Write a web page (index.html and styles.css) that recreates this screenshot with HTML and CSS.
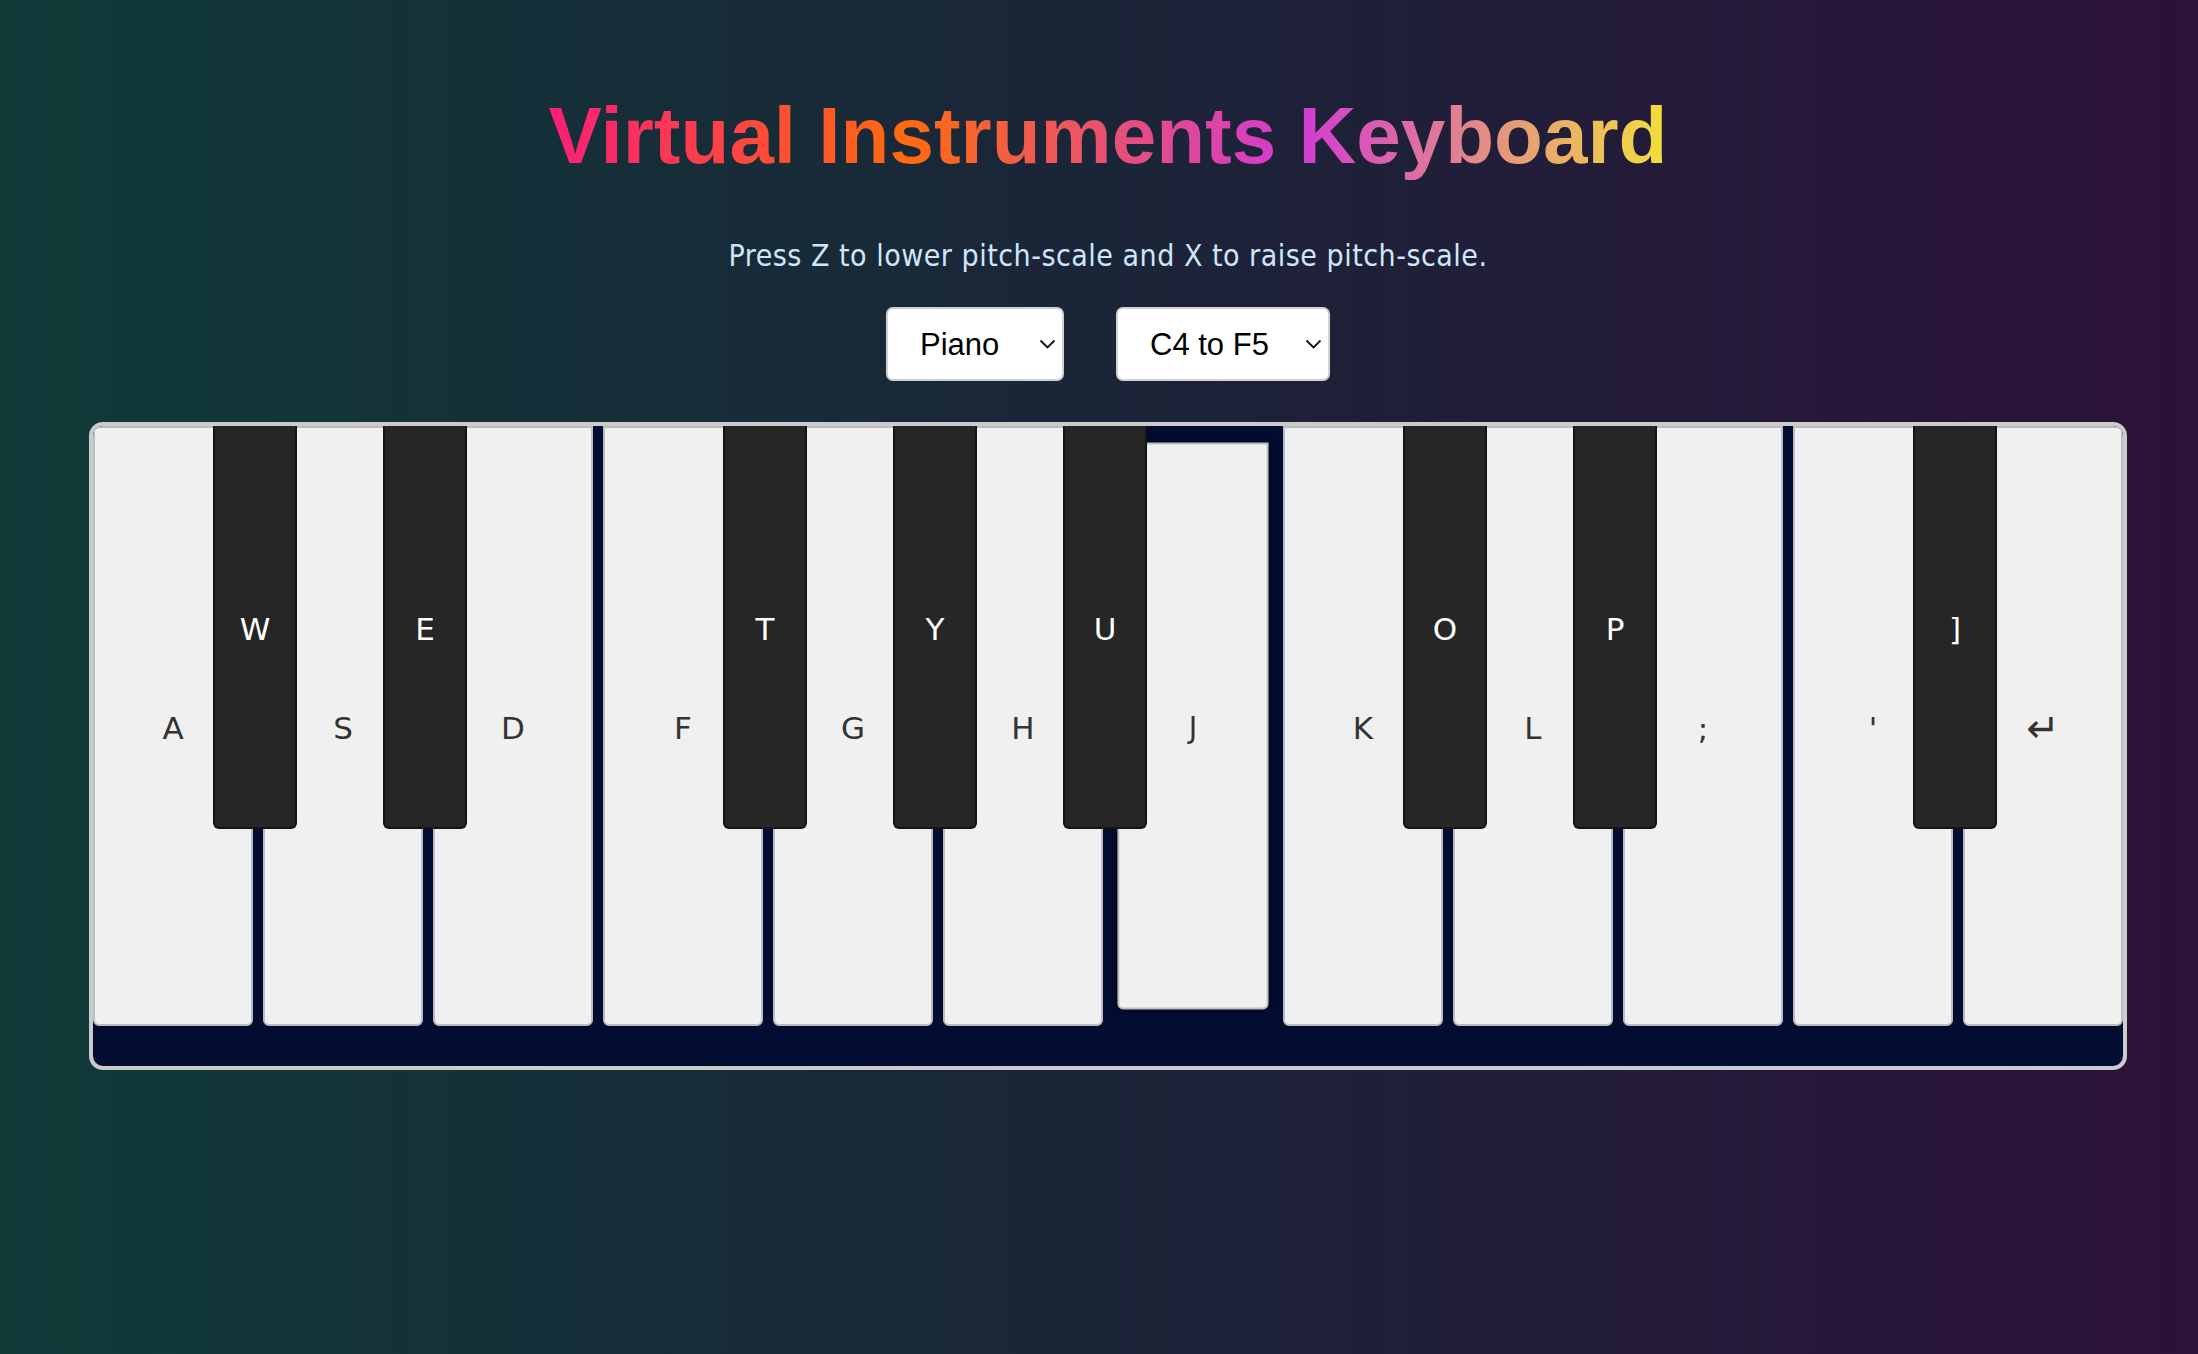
FILE: index.html
```html
<!DOCTYPE html>
<html lang="en">
<head>
<meta charset="utf-8">
<title>Virtual Instruments Keyboard</title>
<link rel="stylesheet" href="styles.css">
</head>
<body>
<main class="app">
  <h1 class="title">Virtual Instruments Keyboard</h1>
  <p class="hint">Press Z to lower pitch-scale and X to raise pitch-scale.</p>
  <div class="controls">
    <div class="select-wrap select-instrument">
      <select class="select" aria-label="Instrument">
        <option>Piano</option>
        <option>Guitar</option>
        <option>Flute</option>
      </select>
      <svg class="chevron" viewBox="0 0 17 10" aria-hidden="true"><polyline points="1.5,1.5 8.5,8.5 15.5,1.5"/></svg>
    </div>
    <div class="select-wrap select-range">
      <select class="select" aria-label="Range">
        <option>C4 to F5</option>
        <option>C3 to F4</option>
        <option>C5 to F6</option>
      </select>
      <svg class="chevron" viewBox="0 0 17 10" aria-hidden="true"><polyline points="1.5,1.5 8.5,8.5 15.5,1.5"/></svg>
    </div>
  </div>
  <div class="keyboard">
    <div class="keys">
      <div class="key white"><span class="label">A</span></div>
      <div class="key black"><span class="label">W</span></div>
      <div class="key white"><span class="label">S</span></div>
      <div class="key black"><span class="label">E</span></div>
      <div class="key white"><span class="label">D</span></div>
      <div class="key white"><span class="label">F</span></div>
      <div class="key black"><span class="label">T</span></div>
      <div class="key white"><span class="label">G</span></div>
      <div class="key black"><span class="label">Y</span></div>
      <div class="key white"><span class="label">H</span></div>
      <div class="key black"><span class="label">U</span></div>
      <div class="key white active"><span class="label">J</span></div>
      <div class="key white"><span class="label">K</span></div>
      <div class="key black"><span class="label">O</span></div>
      <div class="key white"><span class="label">L</span></div>
      <div class="key black"><span class="label">P</span></div>
      <div class="key white"><span class="label">;</span></div>
      <div class="key white"><span class="label">'</span></div>
      <div class="key black"><span class="label">]</span></div>
      <div class="key white last"><span class="label label-enter">&#8629;</span></div>
    </div>
  </div>
</main>
</body>
</html>
```
FILE: styles.css
```css
html, body {
  margin: 0;
  padding: 0;
}

body {
  min-height: 100vh;
  background: linear-gradient(90deg, #0f3a38 0%, #1b2538 50%, #2c1139 100%);
  font-family: "DejaVu Sans", Verdana, sans-serif;
}

.app {
  display: flex;
  flex-direction: column;
  align-items: center;
  padding: 90px 0 0 18px;
}

.title {
  margin: 0;
  font-family: "Liberation Sans", Arial, sans-serif;
  font-weight: bold;
  font-size: 80px;
  line-height: normal;
  background: linear-gradient(90deg, #f81f78 0%, #ff6a0f 32%, #d23ad2 67%, #f3df3a 100%);
  -webkit-background-clip: text;
  background-clip: text;
  color: transparent;
}

.hint {
  margin: 56px 0 0;
  font-family: "DejaVu Sans Condensed", "DejaVu Sans", sans-serif;
  font-stretch: condensed;
  font-size: 30px;
  letter-spacing: 0.5px;
  line-height: normal;
  color: #cfe6fa;
}

.controls {
  margin-top: 34px;
  display: flex;
  gap: 52px;
}

.select-wrap {
  position: relative;
  height: 74px;
}

.select-instrument { width: 178px; }
.select-range { width: 214px; }

.select {
  -webkit-appearance: none;
  appearance: none;
  width: 100%;
  height: 100%;
  box-sizing: border-box;
  margin: 0;
  padding: 0 0 0 32px;
  background: #ffffff;
  border: 2px solid #d2d2d2;
  border-radius: 7px;
  font-family: "Liberation Sans", Arial, sans-serif;
  font-size: 31px;
  color: #000000;
  outline: none;
}

.chevron {
  position: absolute;
  right: 8px;
  top: 50%;
  width: 17px;
  height: 10px;
  transform: translateY(-50%);
  pointer-events: none;
  fill: none;
  stroke: #111111;
  stroke-width: 1.8;
}

.keyboard {
  margin-top: 41px;
  width: 2038px;
  box-sizing: border-box;
  border: 4px solid #cbcbcb;
  border-radius: 14px;
  background: #030d31;
  overflow: hidden;
  padding-bottom: 40px;
}

.keys {
  display: flex;
  align-items: flex-start;
  height: 600px;
}

.key {
  flex: none;
  box-sizing: border-box;
  display: flex;
  justify-content: center;
  align-items: center;
  font-family: "DejaVu Sans", Verdana, sans-serif;
  font-size: 31px;
  line-height: normal;
}

.key.white {
  width: 160px;
  height: 600px;
  margin-right: 10px;
  padding-top: 3px;
  background: #f0f0f0;
  border: 2px solid #bdbdbd;
  border-radius: 0 0 6px 6px;
  color: #333333;
}

.key.white.last {
  margin-right: 0;
}

.key.white.active {
  transform: scale(0.945);
  box-shadow: 0 0 10px rgba(0, 0, 0, 0.5);
}

.key.black {
  width: 84px;
  height: 403px;
  margin: 0 -34px 0 -50px;
  padding-top: 5px;
  z-index: 2;
  background: #262626;
  border: 2px solid #141414;
  border-top: 0;
  border-radius: 0 0 6px 6px;
  color: #ffffff;
}

.label-enter {
  font-size: 40px;
  line-height: 1;
}
```
